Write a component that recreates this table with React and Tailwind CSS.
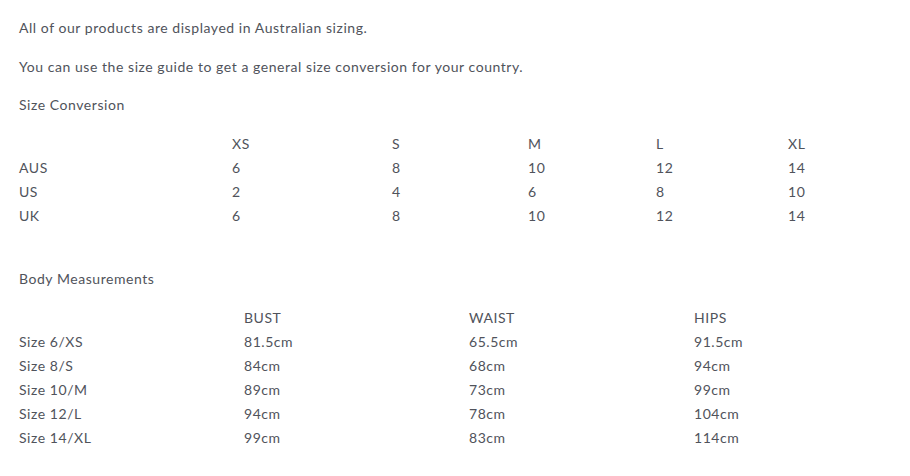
const sizes = [
  ['AUS', '6', '8', '10', '12', '14'],
  ['US', '2', '4', '6', '8', '10'],
  ['UK', '6', '8', '10', '12', '14'],
];

const body = [
  ['Size 6/XS', '81.5cm', '65.5cm', '91.5cm'],
  ['Size 8/S', '84cm', '68cm', '94cm'],
  ['Size 10/M', '89cm', '73cm', '99cm'],
  ['Size 12/L', '94cm', '78cm', '104cm'],
  ['Size 14/XL', '99cm', '83cm', '114cm'],
];

function App() {
  return (
    <div className="min-h-screen bg-white px-[19px] pt-[18px] text-[14px] leading-[20px] tracking-[0.55px] text-[#50535b] font-['Lato',sans-serif]">
      <p>All of our products are displayed in Australian sizing.</p>
      <p className="mt-[19px]">You can use the size guide to get a general size conversion for your country.</p>
      <p className="mt-[18px]">Size Conversion</p>

      {/* tabla de conversion */}
      <div className="mt-[19px]">
        <div className="grid grid-cols-[213px_160px_136px_128px_132px_1fr] h-6">
          <span></span>
          <span>XS</span>
          <span>S</span>
          <span>M</span>
          <span>L</span>
          <span>XL</span>
        </div>
        {sizes.map((row) => (
          <div key={row[0]} className="grid grid-cols-[213px_160px_136px_128px_132px_1fr] h-6">
            {row.map((c, i) => (
              <span key={i}>{c}</span>
            ))}
          </div>
        ))}
      </div>

      <p className="mt-[39px]">Body Measurements</p>

      {/* medidas */}
      <div className="mt-[19px]">
        <div className="grid grid-cols-[225px_225px_225px_1fr] h-6">
          <span></span>
          <span>BUST</span>
          <span>WAIST</span>
          <span>HIPS</span>
        </div>
        {body.map((row) => (
          <div key={row[0]} className="grid grid-cols-[225px_225px_225px_1fr] h-6">
            {row.map((c, i) => (
              <span key={i}>{c}</span>
            ))}
          </div>
        ))}
      </div>
    </div>
  );
}

export default App;
